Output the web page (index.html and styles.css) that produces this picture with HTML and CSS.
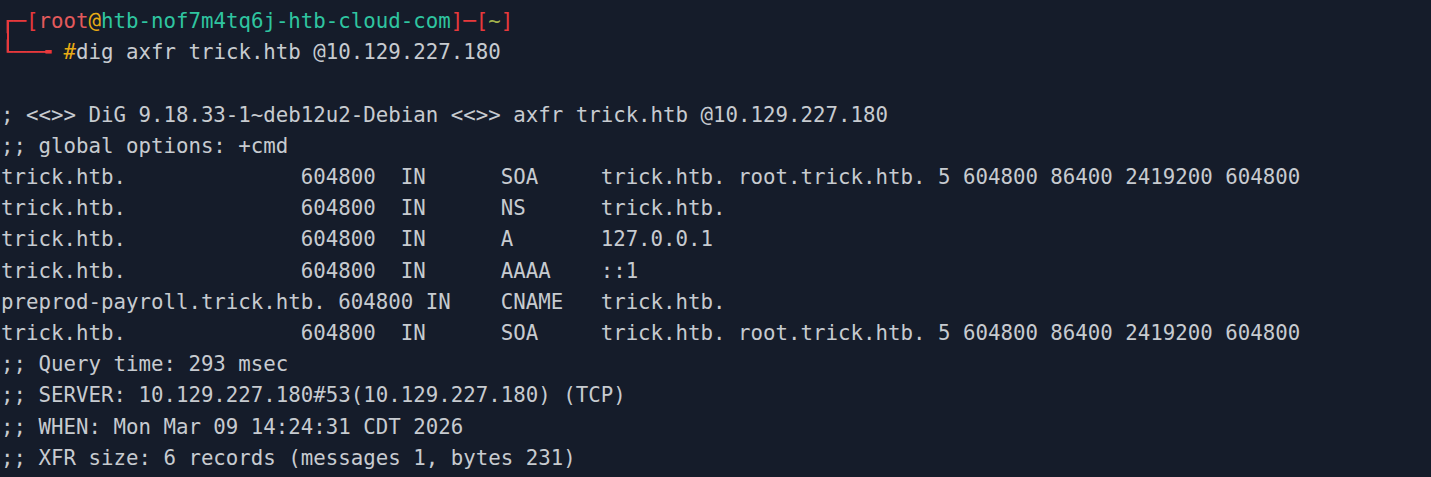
FILE: index.html
```html
<!DOCTYPE html>
<html lang="en">
<head>
<meta charset="utf-8">
<title>Terminal - dig axfr</title>
<link rel="stylesheet" href="styles.css">
</head>
<body>
<main class="terminal">
<div class="prompt"><div class="line"><span class="box">┌─</span><span class="br">[</span><span class="user">root</span><span class="at">@</span><span class="host">htb-nof7m4tq6j-htb-cloud-com</span><span class="br">]─[</span><span class="dir">~</span><span class="br">]</span></div><div class="line"><span class="box">└──╼</span> <span class="hash">#</span>dig axfr trick.htb @10.129.227.180</div></div>
<div class="blank"></div>
<pre class="output">; &lt;&lt;&gt;&gt; DiG 9.18.33-1~deb12u2-Debian &lt;&lt;&gt;&gt; axfr trick.htb @10.129.227.180
;; global options: +cmd
trick.htb.              604800  IN      SOA     trick.htb. root.trick.htb. 5 604800 86400 2419200 604800
trick.htb.              604800  IN      NS      trick.htb.
trick.htb.              604800  IN      A       127.0.0.1
trick.htb.              604800  IN      AAAA    ::1
preprod-payroll.trick.htb. 604800 IN    CNAME   trick.htb.
trick.htb.              604800  IN      SOA     trick.htb. root.trick.htb. 5 604800 86400 2419200 604800
;; Query time: 293 msec
;; SERVER: 10.129.227.180#53(10.129.227.180) (TCP)
;; WHEN: Mon Mar 09 14:24:31 CDT 2026
;; XFR size: 6 records (messages 1, bytes 231)</pre>
</main>
</body>
</html>
```
FILE: styles.css
```css
html, body {
  margin: 0;
  padding: 0;
  background: #151c2a;
  height: 100%;
  overflow: hidden;
}

.terminal {
  padding: 6px 0 0 1px;
  font-family: "DejaVu Sans Mono", "Liberation Mono", monospace;
  font-size: 20.76px;
  line-height: 31.2px;
  color: #c7cbd0;
}

.prompt {
  position: relative;
}

.prompt::before {
  content: "";
  position: absolute;
  left: 6.4px;
  top: 14px;
  width: 1.8px;
  height: 32px;
  background: #e8393c;
}

.line {
  white-space: pre;
}

.blank {
  height: 31.2px;
}

.box, .br {
  color: #e8393c;
}

.user {
  color: #e35a5c;
}

.at, .hash {
  color: #e8ab14;
}

.host {
  color: #2fc5a0;
}

.dir {
  color: #a3b24c;
}

.output {
  margin: 0;
  font: inherit;
  white-space: pre;
}
```
